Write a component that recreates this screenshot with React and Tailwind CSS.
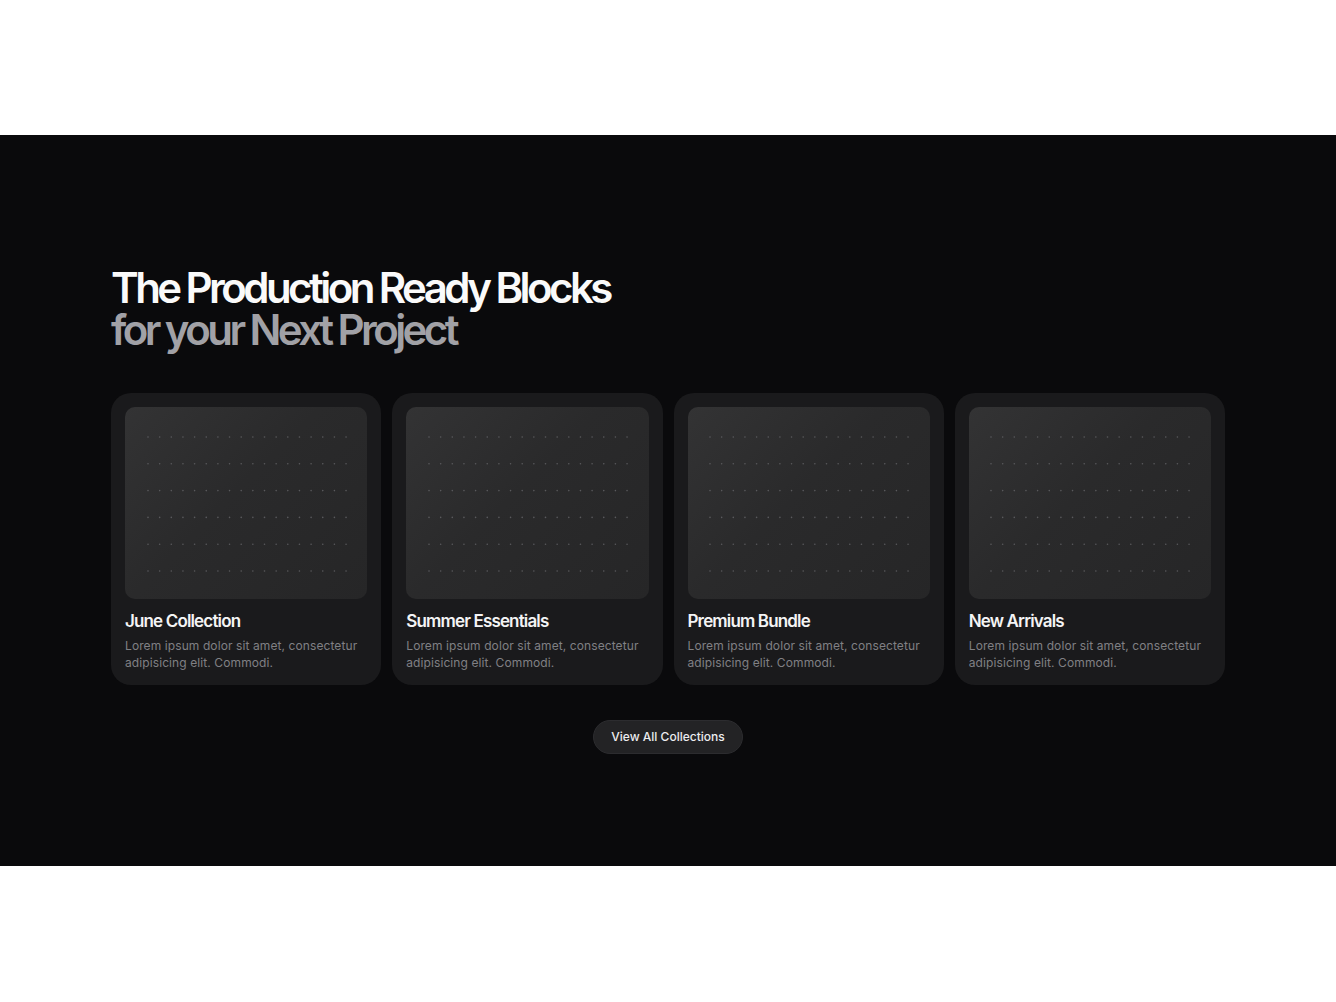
import React from "react";

const cards = [
  { title: "June Collection" },
  { title: "Summer Essentials" },
  { title: "Premium Bundle" },
  { title: "New Arrivals" },
];

function Dots() {
  const cols = 18;
  const rows = 6;
  const dx = 11.65;
  const dy = 26.8;
  const circles = [];
  for (let r = 0; r < rows; r++) {
    for (let c = 0; c < cols; c++) {
      circles.push(
        <circle key={`${r}-${c}`} cx={1 + c * dx} cy={1 + r * dy} r={0.8} fill="#5a5a5d" />
      );
    }
  }
  return (
    <svg width="202" height="137" viewBox="0 0 202 137" className="block">
      {circles}
    </svg>
  );
}

function Card({ title }) {
  return (
    <div className="rounded-[20px] bg-[#1a1a1c] p-[14px]">
      <div className="h-[192px] rounded-[10px] bg-[linear-gradient(135deg,#333334_0%,#2a2a2b_45%,#262627_100%)] flex items-center justify-center pt-[3px] pl-[3px]">
        <Dots />
      </div>
      <h3 className="mt-[11px] text-[17px] leading-[22px] font-semibold tracking-[-0.05em] text-[#f4f4f5]">
        {title}
      </h3>
      <p className="mt-[5px] text-[12px] leading-[17px] tracking-[0.008em] text-[#808084]">
        Lorem ipsum dolor sit amet, consectetur adipisicing elit. Commodi.
      </p>
    </div>
  );
}

export default function App() {
  return (
    <div className="bg-white py-[135px] font-['Inter',sans-serif]">
      <section className="bg-[#0a0a0c] h-[731px] pt-[132px]">
        <div className="w-[1114px] mx-auto">
          <h2 className="text-[42px] leading-[42px] font-semibold tracking-[-0.085em]">
            <span className="block text-[#fafafa]">The Production Ready Blocks</span>
            <span className="block text-[#a1a1a6]">for your Next Project</span>
          </h2>
          <div className="mt-[42px] grid grid-cols-4 gap-[11px]">
            {cards.map((c) => (
              <Card key={c.title} title={c.title} />
            ))}
          </div>
          <div className="mt-[35px] flex justify-center">
            <button className="h-[34px] px-[17px] rounded-full bg-[#232325] border border-[#2c2c2f] text-[12px] font-medium text-[#ececee]">
              View All Collections
            </button>
          </div>
        </div>
      </section>
    </div>
  );
}
